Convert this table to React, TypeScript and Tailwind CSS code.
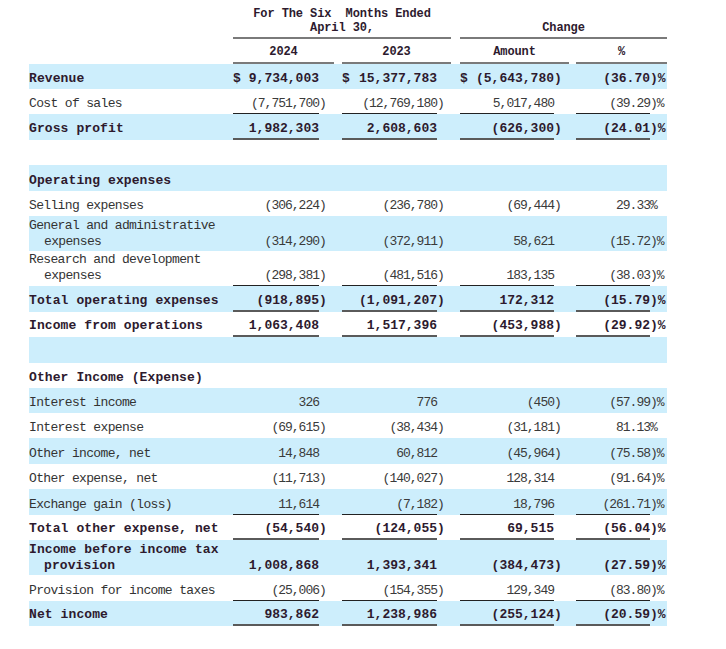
import React from "react";

type RowDef = {
  label?: string | [string, string];
  bold?: boolean;
  blue?: boolean;
  vals?: [string, string, string, string];
  line?: "thin" | "thick";
  h?: number;
};

const rows: RowDef[] = [
  { label: "Revenue", bold: true, blue: true, vals: ["$ 9,734,003", "$ 15,377,783", "$ (5,643,780)", "(36.70)"] },
  { label: "Cost of sales", vals: ["(7,751,700)", "(12,769,180)", "5,017,480", "(39.29)"], line: "thin" },
  { label: "Gross profit", bold: true, blue: true, vals: ["1,982,303", "2,608,603", "(626,300)", "(24.01)"], line: "thick", h: 26 },
  { h: 25 },
  { label: "Operating expenses", bold: true, blue: true, h: 26 },
  { label: "Selling expenses", vals: ["(306,224)", "(236,780)", "(69,444)", "29.33"] },
  { label: ["General and administrative", "expenses"], blue: true, vals: ["(314,290)", "(372,911)", "58,621", "(15.72)"], h: 35 },
  { label: ["Research and development", "expenses"], vals: ["(298,381)", "(481,516)", "183,135", "(38.03)"], h: 35, line: "thin" },
  { label: "Total operating expenses", bold: true, blue: true, vals: ["(918,895)", "(1,091,207)", "172,312", "(15.79)"], h: 26, line: "thick" },
  { label: "Income from operations", bold: true, vals: ["1,063,408", "1,517,396", "(453,988)", "(29.92)"], line: "thick" },
  { blue: true, h: 26 },
  { label: "Other Income (Expense)", bold: true },
  { label: "Interest income", blue: true, vals: ["326", "776", "(450)", "(57.99)"] },
  { label: "Interest expense", vals: ["(69,615)", "(38,434)", "(31,181)", "81.13"] },
  { label: "Other income, net", blue: true, vals: ["14,848", "60,812", "(45,964)", "(75.58)"], h: 26 },
  { label: "Other expense, net", vals: ["(11,713)", "(140,027)", "128,314", "(91.64)"] },
  { label: "Exchange gain (loss)", blue: true, vals: ["11,614", "(7,182)", "18,796", "(261.71)"], h: 26, line: "thin" },
  { label: "Total other expense, net", bold: true, vals: ["(54,540)", "(124,055)", "69,515", "(56.04)"], line: "thick" },
  { label: ["Income before income tax", "provision"], bold: true, blue: true, vals: ["1,008,868", "1,393,341", "(384,473)", "(27.59)"], h: 35 },
  { label: "Provision for income taxes", vals: ["(25,006)", "(154,355)", "129,349", "(83.80)"], line: "thin", h: 26 },
  { label: "Net income", bold: true, blue: true, vals: ["983,862", "1,238,986", "(255,124)", "(20.59)"], line: "thick" },
];

const FONT = { fontFamily: "'Liberation Mono', 'DejaVu Sans Mono', monospace" };

function parse(v: string, pct: boolean) {
  let dollar = false;
  let s = v;
  if (s.startsWith("$ ")) {
    dollar = true;
    s = s.slice(2);
  }
  let suffix = "";
  if (s.endsWith(")")) {
    s = s.slice(0, -1);
    suffix = ")";
  }
  if (pct) suffix += "%";
  return { dollar, num: s, suffix };
}

const widths = [
  { v: "w-[86px]", s: "w-[15px]", g: "w-[8px]" },
  { v: "w-[95px]", s: "w-[14px]", g: "w-[9px]" },
  { v: "w-[94px]", s: "w-[15px]", g: "w-[7px]" },
  { v: "w-[74px]", s: "w-[17px]", g: "" },
];

function Row({ r }: { r: RowDef }) {
  const h = r.h ?? 25;
  const two = Array.isArray(r.label);
  const pb = two ? "pb-[1px]" : r.line ? "pb-[1px]" : "pb-[2px]";
  const txt = r.bold
    ? "font-bold text-[#2d1a2e] tracking-[0.1px]"
    : "text-[#333333] tracking-[-0.65px]";
  const numTxt = r.bold
    ? "font-bold text-[#2d1a2e] tracking-[0px]"
    : "text-[#3a3a3a] tracking-[-1px]";
  const lineCls =
    r.line === "thin"
      ? "border-b border-[#222222]"
      : r.line === "thick"
      ? "border-b-2 border-[#5a5a5a]"
      : "";
  const padCls =
    r.line === "thin"
      ? "border-b border-transparent"
      : r.line === "thick"
      ? "border-b-2 border-transparent"
      : "";
  return (
    <div
      className={`flex w-[638px] text-[13px] leading-[16px] ${r.blue ? "bg-[#cdeefc]" : ""}`}
      style={{ height: h }}
    >
      <div className={`w-[204px] flex flex-col justify-end ${pb} ${padCls} whitespace-pre ${txt}`}>
        {two ? (
          <>
            <div>{(r.label as [string, string])[0]}</div>
            <div className="pl-[15px]">{(r.label as [string, string])[1]}</div>
          </>
        ) : (
          <div>{r.label as string}</div>
        )}
      </div>
      {r.vals &&
        r.vals.map((v, i) => {
          const p = parse(v, i === 3);
          const w = widths[i];
          return (
            <React.Fragment key={i}>
              <div className={`${w.v} flex items-end justify-between ${pb} ${lineCls} ${numTxt} whitespace-pre`}>
                <span>{p.dollar ? "$" : ""}</span>
                <span>{p.num}</span>
              </div>
              <div className={`${w.s} flex items-end ${pb} ${padCls} ${numTxt} whitespace-pre`}>
                <span>{p.suffix}</span>
              </div>
              {w.g && <div className={w.g} />}
            </React.Fragment>
          );
        })}
    </div>
  );
}

export default function App() {
  const hdr = "font-bold text-[#2d1a2e] text-[12px] tracking-[-0.1px] leading-[14px] whitespace-pre";
  return (
    <div className="w-[726px] h-[649px] bg-white pl-[29px]" style={FONT}>
      {/* Header line 1 */}
      <div className="flex h-[39px] w-[638px]">
        <div className="w-[204px]" />
        <div className={`w-[218px] flex flex-col items-center justify-end pb-[2px] border-b-2 border-[#7a7a7a] ${hdr}`}>
          <div>For The Six  Months Ended</div>
          <div>April 30,</div>
        </div>
        <div className="w-[9px]" />
        <div className={`w-[207px] flex flex-col items-center justify-end pb-[2px] border-b-2 border-[#7a7a7a] ${hdr}`}>
          <div>Change</div>
        </div>
      </div>
      {/* Header line 2 */}
      <div className="flex h-[25px] w-[638px]">
        <div className="w-[204px]" />
        <div className={`w-[101px] flex items-center justify-center pt-[2px] border-b-2 border-[#7a7a7a] ${hdr}`}>2024</div>
        <div className="w-[8px]" />
        <div className={`w-[109px] flex items-center justify-center pt-[2px] border-b-2 border-[#7a7a7a] ${hdr}`}>2023</div>
        <div className="w-[9px]" />
        <div className={`w-[109px] flex items-center justify-center pt-[2px] border-b-2 border-[#7a7a7a] ${hdr}`}>Amount</div>
        <div className="w-[7px]" />
        <div className={`w-[91px] flex items-center justify-center pt-[2px] border-b-2 border-[#7a7a7a] ${hdr}`}>%</div>
      </div>
      {rows.map((r, i) => (
        <Row key={i} r={r} />
      ))}
    </div>
  );
}
